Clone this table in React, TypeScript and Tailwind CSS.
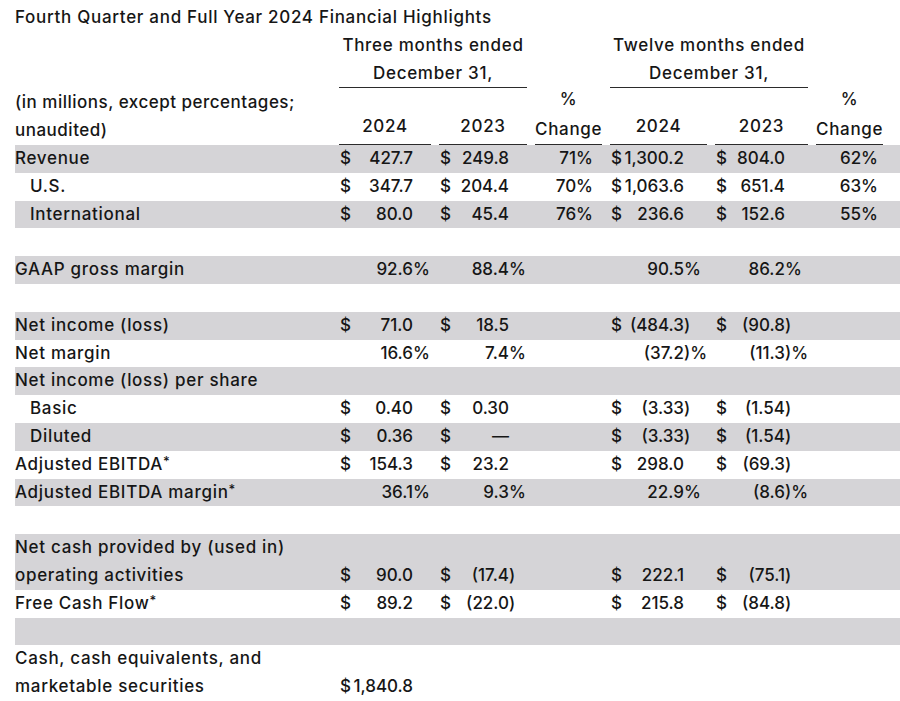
import React from 'react';

type Cell = [string, string, string?] | null;
type Row = {
  label: string[];
  indent?: boolean;
  gray?: boolean;
  q24?: Cell;
  q23?: Cell;
  qchg?: string;
  y24?: Cell;
  y23?: Cell;
  ychg?: string;
};

const grid = 'grid grid-cols-[316px_92px_88px_67px_97px_93px_67px] gap-x-2';

const rows: Row[] = [
  { label: ['Revenue'], gray: true, q24: ['$', '427.7'], q23: ['$', '249.8'], qchg: '71%', y24: ['$', '1,300.2'], y23: ['$', '804.0'], ychg: '62%' },
  { label: ['U.S.'], indent: true, q24: ['$', '347.7'], q23: ['$', '204.4'], qchg: '70%', y24: ['$', '1,063.6'], y23: ['$', '651.4'], ychg: '63%' },
  { label: ['International'], indent: true, gray: true, q24: ['$', '80.0'], q23: ['$', '45.4'], qchg: '76%', y24: ['$', '236.6'], y23: ['$', '152.6'], ychg: '55%' },
  { label: [''] },
  { label: ['GAAP gross margin'], gray: true, q24: ['', '92.6', '%'], q23: ['', '88.4', '%'], y24: ['', '90.5', '%'], y23: ['', '86.2', '%'] },
  { label: [''] },
  { label: ['Net income (loss)'], gray: true, q24: ['$', '71.0'], q23: ['$', '18.5'], y24: ['$', '(484.3', ')'], y23: ['$', '(90.8', ')'] },
  { label: ['Net margin'], q24: ['', '16.6', '%'], q23: ['', '7.4', '%'], y24: ['', '(37.2', ')%'], y23: ['', '(11.3', ')%'] },
  { label: ['Net income (loss) per share'], gray: true },
  { label: ['Basic'], indent: true, q24: ['$', '0.40'], q23: ['$', '0.30'], y24: ['$', '(3.33', ')'], y23: ['$', '(1.54', ')'] },
  { label: ['Diluted'], indent: true, gray: true, q24: ['$', '0.36'], q23: ['$', '—'], y24: ['$', '(3.33', ')'], y23: ['$', '(1.54', ')'] },
  { label: ['Adjusted EBITDA*'], q24: ['$', '154.3'], q23: ['$', '23.2'], y24: ['$', '298.0'], y23: ['$', '(69.3', ')'] },
  { label: ['Adjusted EBITDA margin*'], gray: true, q24: ['', '36.1', '%'], q23: ['', '9.3', '%'], y24: ['', '22.9', '%'], y23: ['', '(8.6', ')%'] },
  { label: [''] },
  { label: ['Net cash provided by (used in)', 'operating activities'], gray: true, q24: ['$', '90.0'], q23: ['$', '(17.4', ')'], y24: ['$', '222.1'], y23: ['$', '(75.1', ')'] },
  { label: ['Free Cash Flow*'], q24: ['$', '89.2'], q23: ['$', '(22.0', ')'], y24: ['$', '215.8'], y23: ['$', '(84.8', ')'] },
  { label: [''], gray: true },
  { label: ['Cash, cash equivalents, and', 'marketable securities'], q24: ['$', '1,840.8'] },
];

function Val({ c, wide }: { c?: Cell; wide?: boolean }) {
  if (!c) return <div />;
  return (
    <div className="flex justify-between pl-[1px]">
      <span>{c[0]}</span>
      <span className="flex">
        <span>{c[1]}</span>
        <span className={wide ? 'w-[23px] text-left' : 'w-[18px] text-left'}>{c[2] ?? ''}</span>
      </span>
    </div>
  );
}

// footnote asterisk sits small and high
function Label({ text }: { text: string }) {
  if (!text.endsWith('*')) return <div>{text}</div>;
  return (
    <div className="h-[27.8px]">
      {text.slice(0, -1)}
      <span className="relative -top-[4px] text-[13px] leading-none">*</span>
    </div>
  );
}

export default function App() {
  return (
    <div className="bg-white w-[900px] h-[701px] overflow-hidden pt-[4px] pl-[15px] text-[#161616] text-[17px] font-[450] leading-[27.8px] font-['Inter',sans-serif]">
      <div className="tracking-[0.7px]">Fourth Quarter and Full Year 2024 Financial Highlights</div>

      {/* column group headings */}
      <div className={grid + ' tracking-[0.7px]'}>
        <div />
        <div className="col-span-2 text-center border-b border-[#2b2b2b]">
          <div>Three months ended</div>
          <div>December 31,</div>
        </div>
        <div />
        <div className="col-span-2 text-center border-b border-[#2b2b2b]">
          <div>Twelve months ended</div>
          <div>December 31,</div>
        </div>
        <div />
      </div>

      <div className={grid + ' items-end tracking-[0.7px]'}>
        <div className="tracking-[0.5px]">
          <div>(in millions, except percentages;</div>
          <div>unaudited)</div>
        </div>
        <div className="h-full flex items-end justify-center pb-[3px] border-b border-[#2b2b2b]">2024</div>
        <div className="h-full flex items-end justify-center pb-[3px] border-b border-[#2b2b2b]">2023</div>
        <div className="text-center border-b border-[#2b2b2b]">
          <div className="-mt-[2px]">%</div>
          <div className="mt-[2px]">Change</div>
        </div>
        <div className="h-full flex items-end justify-center pb-[3px] border-b border-[#2b2b2b]">2024</div>
        <div className="h-full flex items-end justify-center pb-[3px] border-b border-[#2b2b2b]">2023</div>
        <div className="text-center border-b border-[#2b2b2b]">
          <div className="-mt-[2px]">%</div>
          <div className="mt-[2px]">Change</div>
        </div>
      </div>

      {rows.map((r, i) => (
        <div
          key={i}
          className={grid + ' items-end min-h-[27.8px] ' + (r.gray ? 'bg-[#d5d4d7]' : 'bg-white')}
        >
          <div className={'tracking-[0.7px] ' + (r.indent ? 'pl-[15px]' : '')}>
            {r.label.map((l, j) => (
              <Label key={j} text={l} />
            ))}
          </div>
          <Val c={r.q24} />
          <Val c={r.q23} />
          <div className="text-right pr-[9px]">{r.qchg}</div>
          <Val c={r.y24} wide />
          <Val c={r.y23} wide />
          <div className="text-right pr-[5px]">{r.ychg}</div>
        </div>
      ))}
    </div>
  );
}
